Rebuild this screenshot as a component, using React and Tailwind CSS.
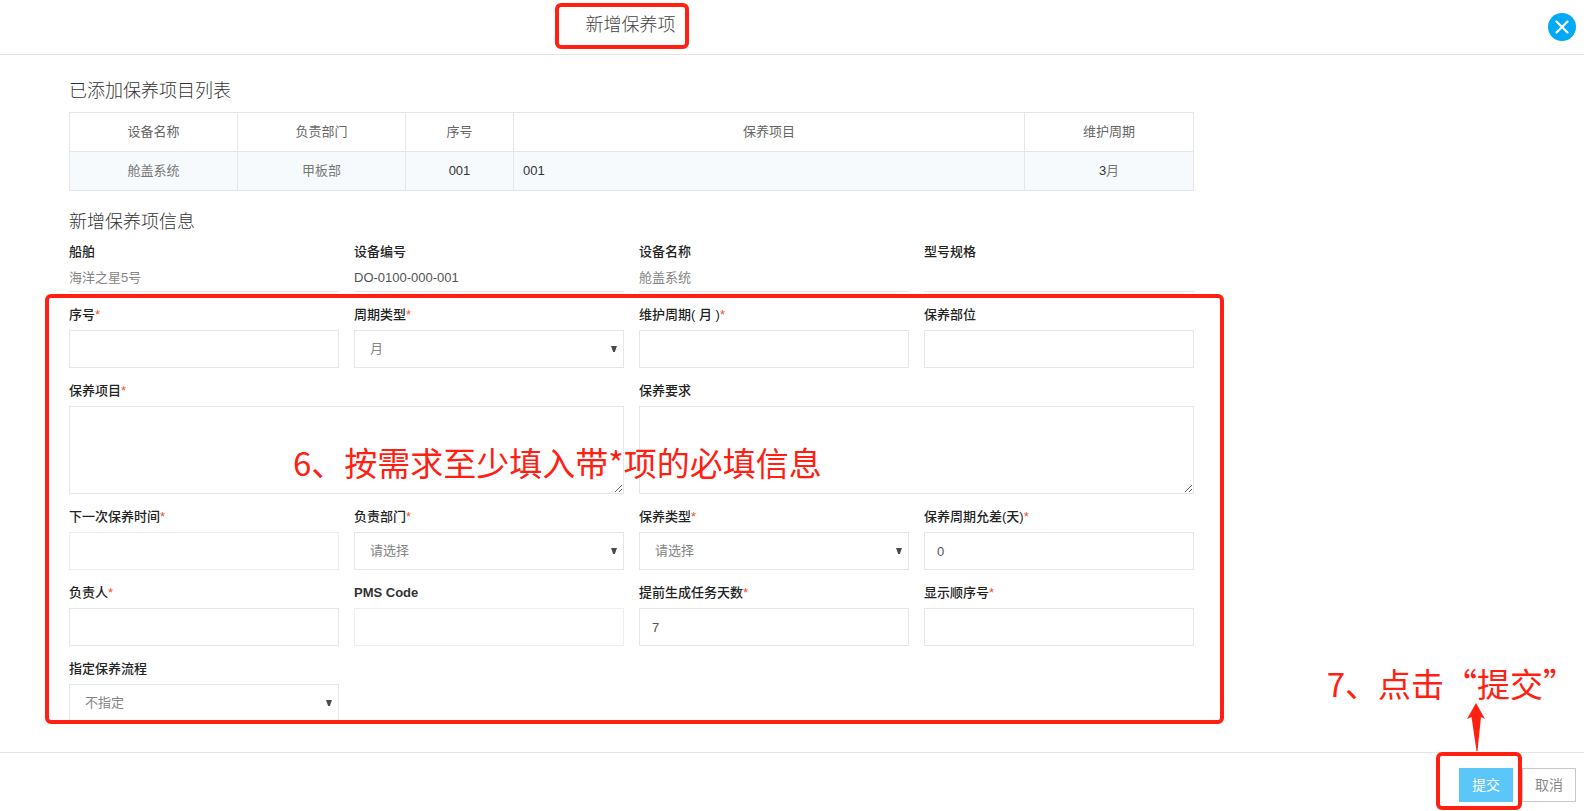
import { useState } from 'react'

const equipmentInfo = [
  { label: '船舶', value: '海洋之星5号', tone: 'text-[#858585]' },
  { label: '设备编号', value: 'DO-0100-000-001', tone: 'text-[#555]' },
  { label: '设备名称', value: '舱盖系统', tone: 'text-[#858585]' },
  { label: '型号规格', value: '', tone: 'text-[#858585]' },
]

const addedItems = [
  { equipment: '舱盖系统', department: '甲板部', no: '001', item: '001', cycle: '3', unit: '月' },
]

function Field({ id, label, required, className = '', children }) {
  return (
    <div className={className}>
      <label htmlFor={id} className="block h-5 mb-[5px] text-[13px] leading-5 font-medium text-[#222]">
        {label}
        {required && <span className="font-normal text-[#f4511e]">*</span>}
      </label>
      {children}
    </div>
  )
}

function TextInput({ id, value = '', readOnly = false }) {
  const [text, setText] = useState(value)
  return (
    <input
      id={id}
      type="text"
      value={text}
      readOnly={readOnly}
      onChange={(e) => setText(e.target.value)}
      className={`block w-full h-[38px] px-3 border bg-white text-[13px] text-[#555] outline-none ${
        readOnly ? 'border-[#eeeeee]' : 'border-[#e4e7ea]'
      }`}
    />
  )
}

function SelectInput({ id, options }) {
  return (
    <div className="relative">
      <select
        id={id}
        className="block w-full h-[38px] pl-[15px] pr-6 border border-[#e4e7ea] bg-white text-[13px] text-[#858585] appearance-none outline-none"
      >
        {options.map((option) => (
          <option key={option}>{option}</option>
        ))}
      </select>
      <svg
        viewBox="0 0 6 6"
        className="absolute right-[7px] top-4 w-[6px] h-[6px] pointer-events-none"
        fill="#4a4a4a"
      >
        <path d="M0 0h6L3.8 6H2.2z" />
      </svg>
    </div>
  )
}

function TextArea({ id }) {
  return (
    <textarea
      id={id}
      className="block w-full h-[88px] px-3 py-2 border border-[#e4e7ea] bg-white text-[13px] text-[#555] outline-none resize"
    />
  )
}

export default function App() {
  return (
    <div className="h-screen flex flex-col overflow-hidden bg-white font-['Liberation_Sans','Noto_Sans_CJK_SC',sans-serif] text-[13px] text-[#555]">
      {/* Header */}
      <header className="relative shrink-0 h-[55px] border-b border-[#e5e5e5] pl-[68px]">
        <div className="max-w-[1125px] h-[50px] flex items-center justify-center">
          <h1 className="relative text-lg font-light text-[#444]">
            新增保养项
            <span className="absolute -left-[31px] -right-[13px] -top-2 h-[46px] border-4 border-[#ff2012] rounded-md" />
          </h1>
        </div>
        <button
          type="button"
          aria-label="关闭"
          className="absolute right-2 top-[13px] w-7 h-7 rounded-full bg-[#03a9f4] flex items-center justify-center"
        >
          <svg viewBox="0 0 14 14" className="w-[14px] h-[14px]" stroke="#fff" strokeWidth="2.2" strokeLinecap="round">
            <path d="M1.5 1.5l11 11M12.5 1.5l-11 11" />
          </svg>
        </button>
      </header>

      {/* Content */}
      <main className="relative flex-1 min-h-0 pb-8">
        <div className="h-full overflow-hidden pl-[69px] pt-[22px]">
          <div className="max-w-[1125px]">
            <h2 className="text-lg leading-7 font-light text-[#333] mb-[7px]">已添加保养项目列表</h2>
            <table className="w-full table-fixed border-collapse text-center">
              <colgroup>
                <col className="w-[168px]" />
                <col className="w-[168px]" />
                <col className="w-[108px]" />
                <col />
                <col className="w-[169px]" />
              </colgroup>
              <thead>
                <tr className="h-[39px]">
                  {['设备名称', '负责部门', '序号', '保养项目', '维护周期'].map((title) => (
                    <th key={title} className="border border-[#e4e7ea] font-normal text-[#666]">
                      {title}
                    </th>
                  ))}
                </tr>
              </thead>
              <tbody>
                {addedItems.map((row) => (
                  <tr key={row.no} className="h-[39px] bg-[#f6fafd] text-[#777]">
                    <td className="border border-[#e4e7ea]">{row.equipment}</td>
                    <td className="border border-[#e4e7ea]">{row.department}</td>
                    <td className="border border-[#e4e7ea] text-[#333]">{row.no}</td>
                    <td className="border border-[#e4e7ea] text-[#333] text-left pl-[9px]">{row.item}</td>
                    <td className="border border-[#e4e7ea]">
                      <span className="text-[#333]">{row.cycle}</span>
                      {row.unit}
                    </td>
                  </tr>
                ))}
              </tbody>
            </table>

            <h2 className="text-lg leading-7 font-light text-[#333] mt-[17px] mb-[6px]">新增保养项信息</h2>
            <dl className="grid grid-cols-4 gap-x-[15px] mb-[13px]">
              {equipmentInfo.map((info) => (
                <div key={info.label}>
                  <dt className="h-5 leading-5 font-medium text-[#222]">{info.label}</dt>
                  <dd className={`h-[30px] pt-1 leading-6 border-b border-[#e4e7ea] ${info.tone}`}>{info.value}</dd>
                </div>
              ))}
            </dl>

            <form id="maintenance-form" className="grid grid-cols-4 gap-x-[15px] gap-y-[13px]">
              <Field id="no" label="序号" required>
                <TextInput id="no" />
              </Field>
              <Field id="cycleType" label="周期类型" required>
                <SelectInput id="cycleType" options={['月']} />
              </Field>
              <Field id="cycle" label="维护周期( 月 )" required>
                <TextInput id="cycle" />
              </Field>
              <Field id="part" label="保养部位">
                <TextInput id="part" />
              </Field>
              <Field id="item" label="保养项目" required className="col-span-2">
                <TextArea id="item" />
              </Field>
              <Field id="demand" label="保养要求" className="col-span-2">
                <TextArea id="demand" />
              </Field>
              <Field id="nextTime" label="下一次保养时间" required>
                <TextInput id="nextTime" readOnly />
              </Field>
              <Field id="department" label="负责部门" required>
                <SelectInput id="department" options={['请选择']} />
              </Field>
              <Field id="type" label="保养类型" required>
                <SelectInput id="type" options={['请选择']} />
              </Field>
              <Field id="tolerance" label="保养周期允差(天)" required>
                <TextInput id="tolerance" value="0" />
              </Field>
              <Field id="owner" label="负责人" required>
                <TextInput id="owner" />
              </Field>
              <Field id="pmsCode" label={<span className="font-bold text-[#333]">PMS Code</span>}>
                <TextInput id="pmsCode" readOnly />
              </Field>
              <Field id="advance" label="提前生成任务天数" required>
                <TextInput id="advance" value="7" />
              </Field>
              <Field id="sort" label="显示顺序号" required>
                <TextInput id="sort" />
              </Field>
              <Field id="flow" label="指定保养流程">
                <SelectInput id="flow" options={['不指定']} />
              </Field>
            </form>
          </div>
        </div>

        {/* Step 6 callout */}
        <div className="absolute left-[45px] top-[239px] bottom-7 w-full max-w-[1179px] border-4 border-[#ff2012] rounded-md pointer-events-none">
          <p className="absolute left-[244px] top-[140px] whitespace-nowrap font-['Noto_Sans_CJK_SC',sans-serif] text-[33px] leading-[48px] text-[#ff2012]">
            6、按需求至少填入带*项的必填信息
          </p>
        </div>
      </main>

      {/* Footer */}
      <footer className="relative shrink-0 h-[59px] border-t border-[#e5e5e5] flex items-start justify-end gap-[9px] pt-[15px] pr-2">
        <div className="relative">
          <button type="submit" form="maintenance-form" className="block w-[54px] h-[34px] bg-[#5bc6f8] text-sm text-white">
            提交
          </button>
          <span className="absolute -left-[23px] -right-[9px] -top-4 h-[58px] border-4 border-[#ff2012] rounded-md pointer-events-none" />
        </div>
        <button type="button" className="w-[54px] h-[34px] border border-[#c8c8c8] bg-white text-sm text-[#888]">
          取消
        </button>

        {/* Step 7 callout */}
        <p className="absolute right-2 bottom-[104px] whitespace-nowrap font-['Noto_Sans_CJK_SC',sans-serif] text-[33px] leading-[48px] text-[#ff2012] pointer-events-none">
          7、点击“提交”
        </p>
        <svg
          viewBox="0 0 18 48"
          className="absolute right-[99px] bottom-[60px] w-[18px] h-12 pointer-events-none"
          fill="#ff2012"
        >
          <path d="M9 0L18 16L14 14L10.5 48H9.5L4.5 14L0 16z" />
        </svg>
      </footer>
    </div>
  )
}
